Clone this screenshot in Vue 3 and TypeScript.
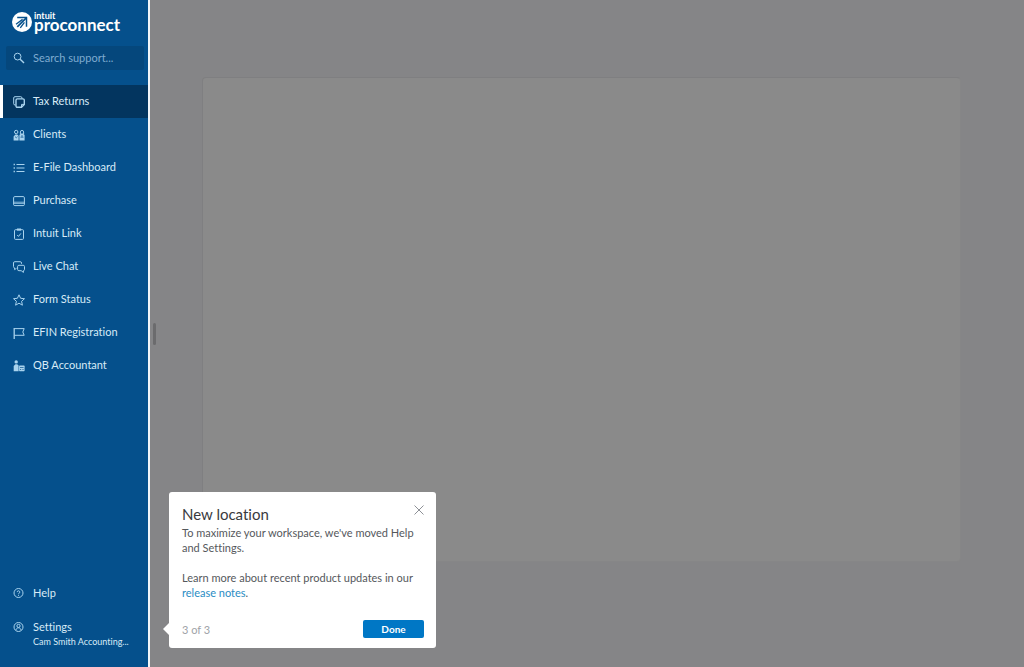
<script setup lang="ts">
import { ref } from 'vue'

interface NavItem {
  label: string
  icon: string
}

const navItems: NavItem[] = [
  { label: 'Tax Returns', icon: 'returns' },
  { label: 'Clients', icon: 'clients' },
  { label: 'E-File Dashboard', icon: 'list' },
  { label: 'Purchase', icon: 'card' },
  { label: 'Intuit Link', icon: 'clipboard' },
  { label: 'Live Chat', icon: 'chat' },
  { label: 'Form Status', icon: 'star' },
  { label: 'EFIN Registration', icon: 'flag' },
  { label: 'QB Accountant', icon: 'accountant' },
]

const active = ref('Tax Returns')
const query = ref('')
const tourOpen = ref(true)
</script>

<template>
  <div class="app">
    <aside class="sidebar">
      <div class="brand">
        <svg class="brand-mark" viewBox="0 0 20 20" aria-hidden="true">
          <circle cx="10" cy="10" r="10" fill="#fff" />
          <g fill="none" stroke="#05508c" stroke-width="1.5">
            <path d="M5.200 5.600h9.300v9.200" />
            <path d="M4 12.200 10.600 7.400" stroke-width="1.300" />
            <path d="M5.300 14.800 14.300 5.800" stroke-width="1.700" />
            <path d="M8.300 15.800 12.400 10.400" stroke-width="1.300" />
          </g>
        </svg>
        <div class="brand-text">
          <span class="brand-top">intuit</span>
          <span class="brand-name">proconnect</span>
        </div>
      </div>

      <label class="search">
        <svg class="icon" viewBox="0 0 12 12" aria-hidden="true">
          <circle cx="4.600" cy="4.600" r="3.400" />
          <path d="M7.200 7.200 11 11" stroke-width="1.4" />
        </svg>
        <input v-model="query" type="text" placeholder="Search support..." aria-label="Search support" />
      </label>

      <nav class="nav">
        <a
          v-for="item in navItems"
          :key="item.label"
          href="#"
          class="nav-item"
          :class="{ active: active === item.label }"
          @click.prevent="active = item.label"
        >
          <svg class="icon" viewBox="0 0 12 12" aria-hidden="true">
            <g v-if="item.icon === 'returns'">
              <path d="M2.600 9H2A1.300 1.300 0 0 1 .7 7.700V2A1.300 1.300 0 0 1 2 .7h5.700A1.300 1.300 0 0 1 9 2v.6" />
              <path d="M4.300 2.900h5.700a1.300 1.300 0 0 1 1.300 1.300v4.300L8.500 11.300H4.300A1.300 1.300 0 0 1 3 10V4.200a1.300 1.300 0 0 1 1.300-1.300z" stroke-width="1.400" />
              <path d="M11.200 8.400H8.500v2.800" />
            </g>
            <g v-else-if="item.icon === 'clients'">
              <circle cx="3.200" cy="3" r="1.700" />
              <path d="M7.400 5V3a1.600 1.600 0 0 1 3.200 0v2" />
              <path class="solid" d="M.6 11.400V7.400L2.400 5.600h1.800l1.400 1.200v4.600zM6.400 11.400V6L8 4.400h2L11.600 6v5.400z" />
              <path class="cut" d="M2 7.600l1.300 1.200 1.300-1.200M7.500 8.200h3M9 6v2" />
            </g>
            <g v-else-if="item.icon === 'list'">
              <path d="M3.500 2.500h8M3.500 6h8M3.500 9.500h8" />
              <path d="M.6 2.500h1.300M.6 6h1.300M.6 9.500h1.300" stroke-width="1.300" />
            </g>
            <g v-else-if="item.icon === 'card'">
              <rect x=".6" y="1.600" width="10.800" height="9" rx="1.200" />
              <path d="M.6 7.200h10.800M.6 8.400h10.800" stroke-width=".8" />
            </g>
            <g v-else-if="item.icon === 'clipboard'">
              <path d="M4 1.700H2.500a1 1 0 0 0-1 1v7.700a1 1 0 0 0 1 1h7a1 1 0 0 0 1-1V2.700a1 1 0 0 0-1-1H8" />
              <path class="solid" d="M4 .5h4v2.200H4z" stroke="none" />
              <path d="m4.200 7 1.300 1.400 2.400-3" />
            </g>
            <g v-else-if="item.icon === 'chat'">
              <path d="M3.500 7.300 1.600 8.600V6.900A1.300 1.300 0 0 1 .5 5.600V2A1.300 1.300 0 0 1 1.800.7h5.400A1.300 1.300 0 0 1 8.500 2v.8" />
              <path d="M5.900 4.300h4.300a1.300 1.300 0 0 1 1.300 1.300v2.800a1.300 1.300 0 0 1-1.100 1.300v1.700L8.200 9.700H5.900a1.300 1.300 0 0 1-1.300-1.300V5.600a1.300 1.300 0 0 1 1.300-1.300z" />
            </g>
            <path v-else-if="item.icon === 'star'" d="m6 .8 1.600 3.500 3.900.4-2.900 2.600.8 3.900L6 9.200l-3.400 2 .8-3.900L.5 4.700l3.900-.4z" />
            <g v-else-if="item.icon === 'flag'">
              <path d="M1.200 12V1" stroke-width="1.300" />
              <path d="M1.200 1.600h10L9.800 5l1.400 3.300h-10" />
            </g>
            <g v-else>
              <circle class="solid" cx="3.200" cy="1.900" r="1.700" />
              <path class="solid" d="M.7 11.200V6l1.700-1.700h1.800l1.400 1.300v5.600z" />
              <rect x="6.100" y="5.600" width="5.500" height="5.600" rx=".6" class="solid" />
              <path class="cut" d="M7 7.500h3.600M7 9.500h1.200M9.400 9.500h1.200" />
            </g>
          </svg>
          <span>{{ item.label }}</span>
        </a>
      </nav>

      <div class="footer">
        <a href="#" class="footer-item" @click.prevent>
          <svg class="icon" viewBox="0 0 12 12" aria-hidden="true">
            <circle cx="5.500" cy="6" r="4.500" />
            <path d="M4.200 5.100a1.300 1.300 0 1 1 1.800 1.200c-.4.200-.5.400-.5.700M5.500 7.800v1" />
          </svg>
          <span>Help</span>
        </a>
        <a href="#" class="footer-item" @click.prevent>
          <svg class="icon" viewBox="0 0 12 12" aria-hidden="true">
            <circle cx="5.500" cy="6" r="4.500" />
            <circle cx="5.500" cy="4.900" r="1.600" />
            <path d="M3 9.400c.2-1.700 1-2.600 2.500-2.600S7.800 7.700 8 9.400" />
          </svg>
          <span>Settings</span>
          <small>Cam Smith Accounting...</small>
        </a>
      </div>
    </aside>

    <main class="workspace">
      <div class="grip"></div>
      <section class="panel"></section>
    </main>

    <div v-if="tourOpen" class="tour" role="dialog" aria-labelledby="tour-title">
      <header class="tour-head">
        <h2 id="tour-title">New location</h2>
        <button class="close" type="button" aria-label="Close" @click="tourOpen = false">
          <svg viewBox="0 0 10 10" aria-hidden="true"><path d="m.5.5 9 9m0-9-9 9" /></svg>
        </button>
      </header>
      <p>To maximize your workspace, we've moved Help and Settings.</p>
      <p>Learn more about recent product updates in our <a href="#" @click.prevent>release notes</a>.</p>
      <div class="tour-foot">
        <span>3 of 3</span>
        <button class="done" type="button" @click="tourOpen = false">Done</button>
      </div>
    </div>
  </div>
</template>

<style>
body {
  margin: 0;
}
</style>

<style scoped>
.app {
  position: relative;
  display: flex;
  min-height: 100vh;
  background: #858587;
  font-family: Lato, "Liberation Sans", sans-serif;
  font-size: 11px;
  font-variant-ligatures: none;
}

a {
  color: inherit;
  text-decoration: none;
}

.sidebar {
  display: flex;
  flex-direction: column;
  flex: none;
  width: 148px;
  border-right: 2px solid #f2f6f9;
  background: #05508c;
  color: #d8ebf7;
}

.brand {
  display: flex;
  gap: 2px;
  height: 34px;
  padding: 12px 12px 0;
  color: #fff;
}

.brand-mark {
  width: 20px;
  height: 20px;
  flex: none;
}

.brand-text {
  display: flex;
  flex-direction: column;
  font-weight: 700;
}

.brand-top {
  font-size: 9px;
  line-height: 7px;
}

.brand-name {
  font-size: 17px;
  line-height: 12px;
}

.icon {
  width: 12px;
  height: 12px;
  flex: none;
  fill: none;
  stroke: #a9d3ee;
  stroke-width: 1;
}

.solid {
  fill: #a9d3ee;
  stroke: none;
}

.cut {
  stroke: #05508c;
  stroke-width: 0.7;
}

.search {
  display: flex;
  align-items: center;
  gap: 8px;
  height: 24px;
  margin: 0 4px 0 6px;
  padding: 0 7px;
  border-radius: 2px;
  background: #05477c;
}

.search input {
  flex: 1;
  min-width: 0;
  padding: 0 0 2px;
  border: 0;
  outline: 0;
  background: transparent;
  color: #d8ebf7;
  font: inherit;
}

.search input::placeholder {
  color: #7fabd0;
  opacity: 1;
}

.nav {
  margin-top: 15px;
}

.nav-item {
  display: flex;
  align-items: center;
  gap: 8px;
  height: 33px;
  padding-left: 10px;
  border-left: 3px solid transparent;
}

.nav-item span {
  padding-bottom: 2px;
}

.nav-item.active {
  border-left-color: #fff;
  background: #03355f;
}

.footer {
  margin-top: auto;
  padding: 0 0 18px 13px;
}

.footer-item {
  display: grid;
  grid-template-columns: 12px 1fr;
  column-gap: 8px;
  align-items: center;
  line-height: 16px;
}

.footer-item + .footer-item {
  margin-top: 18px;
}

.footer-item small {
  grid-column: 2;
  font-size: 9px;
  line-height: 14px;
  white-space: nowrap;
}

.workspace {
  display: flex;
  align-items: center;
  flex: 1;
}

.grip {
  flex: none;
  width: 3px;
  height: 22px;
  margin-left: 3px;
  border-radius: 2px;
  background: #6b6b6d;
}

.panel {
  align-self: stretch;
  flex: 1;
  box-sizing: border-box;
  margin: 77px 63px 105px 46px;
  border: 1px solid #7f7f81;
  border-right-color: #868687;
  border-bottom-color: #868687;
  border-radius: 4px;
  background: #8a8a8a;
}

.tour {
  position: absolute;
  left: 169px;
  bottom: 19px;
  box-sizing: border-box;
  width: 267px;
  padding: 12px 12px 10px 13px;
  border-radius: 3px;
  background: #fff;
  color: #55585c;
}

.tour::before {
  content: "";
  position: absolute;
  left: -6px;
  bottom: 13px;
  border: 6px solid transparent;
  border-left: 0;
  border-right-color: #fff;
}

.tour-head {
  display: flex;
  justify-content: space-between;
  align-items: flex-start;
  margin-bottom: 1px;
}

.tour h2 {
  margin: 0;
  color: #393a3d;
  font-size: 15px;
  font-weight: 400;
  line-height: 20px;
}

.close {
  width: 10px;
  height: 12px;
  padding: 0;
  border: 0;
  background: transparent;
  cursor: pointer;
}

.close svg {
  display: block;
  width: 10px;
  height: 12px;
  fill: none;
  stroke: #8d9096;
}

.tour p {
  margin: 0 0 15px;
  line-height: 15px;
}

.tour p a {
  color: #2a8cc4;
}

.tour-foot {
  display: flex;
  justify-content: space-between;
  align-items: center;
  margin-top: 20px;
  color: #a0a3a8;
}

.done {
  width: 61px;
  height: 18px;
  padding: 0;
  border: 0;
  border-radius: 2px;
  background: #0077c5;
  color: #fff;
  font: inherit;
  font-size: 10px;
  font-weight: 700;
  line-height: 18px;
  cursor: pointer;
}
</style>
